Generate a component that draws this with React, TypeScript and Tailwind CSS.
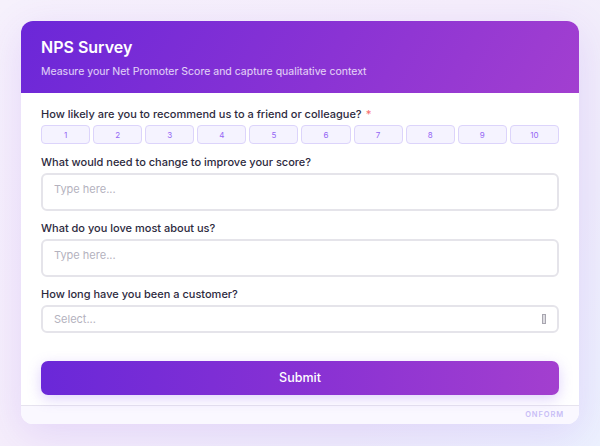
import React from 'react';

const scores = [1, 2, 3, 4, 5, 6, 7, 8, 9, 10];

function Label({ children, required }: { children: React.ReactNode; required?: boolean }) {
  return (
    <label className="block text-[11px] font-medium leading-[14px] text-[#2d2a3e]">
      {children}
      {required && <span className="ml-1 text-[#f87171]">*</span>}
    </label>
  );
}

export default function App() {
  return (
    <div
      className="flex h-[446px] w-[600px] items-start justify-center overflow-hidden bg-[linear-gradient(135deg,#f6f1fc_0%,#f5eefb_45%,#efedfb_75%,#ecf1fe_100%)] pt-[21px]"
      style={{ fontFamily: 'Inter, "Noto Sans", sans-serif' }}
    >
      <div className="w-[558px] overflow-hidden rounded-xl bg-white shadow-[0_10px_40px_rgba(124,58,237,0.14)]">
        {/* header */}
        <div className="flex h-[72px] flex-col bg-[linear-gradient(120deg,#6b27d8_0%,#8a33d4_55%,#a23fd0_100%)] px-5 pt-[16px]">
          <h1 className="text-[16px] font-semibold leading-[20px] text-white">NPS Survey</h1>
          <p className="mt-[8px] text-[10.5px] leading-[14px] text-white/80">
            Measure your Net Promoter Score and capture qualitative context
          </p>
        </div>

        {/* body */}
        <div className="flex flex-col px-5 pt-[14px]">
          <Label required>How likely are you to recommend us to a friend or colleague?</Label>
          <div className="mt-[4px] flex gap-[3px]">
            {scores.map((n) => (
              <button
                key={n}
                className="flex h-[19px] flex-1 items-center justify-center rounded-[4px] border border-[#dcd4fb] bg-[#f5f3ff] text-[8px] text-[#9466f4]"
              >
                {n}
              </button>
            ))}
          </div>

          <div className="mt-[11px]">
            <Label>What would need to change to improve your score?</Label>
          </div>
          <div className="mt-[4px] h-[38px] rounded-[6px] border-2 border-[#e5e4ea] px-[11px] pt-[6px] text-[11px] text-[#b4b2be]">
            Type here...
          </div>

          <div className="mt-[10px]">
            <Label>What do you love most about us?</Label>
          </div>
          <div className="mt-[4px] h-[38px] rounded-[6px] border-2 border-[#e5e4ea] px-[11px] pt-[6px] text-[11px] text-[#b4b2be]">
            Type here...
          </div>

          <div className="mt-[10px]">
            <Label>How long have you been a customer?</Label>
          </div>
          <div className="mt-[4px] flex h-[28px] items-center justify-between rounded-[6px] border-2 border-[#e5e4ea] pl-[11px] pr-[11px] text-[11px] text-[#b4b2be]">
            <span>Select...</span>
            <span className="h-[10px] w-[4px] border border-[#a8a6b0] bg-[#dedde2]" />
          </div>

          <button className="mb-[10px] mt-[28px] h-[34px] w-full rounded-[7px] bg-[linear-gradient(90deg,#6a28d8_0%,#8a32d3_55%,#a33fcf_100%)] text-[12.5px] font-medium text-white shadow-[0_4px_14px_rgba(139,92,246,0.28)]">
            Submit
          </button>
        </div>

        {/* footer */}
        <div className="flex h-[19px] items-center justify-end border-t border-[#e6e3ee] bg-[#faf8ff] pr-[15px]">
          <span className="text-[7.5px] font-semibold tracking-[0.12em] text-[#c8bdf6]">ONFORM</span>
        </div>
      </div>
    </div>
  );
}
